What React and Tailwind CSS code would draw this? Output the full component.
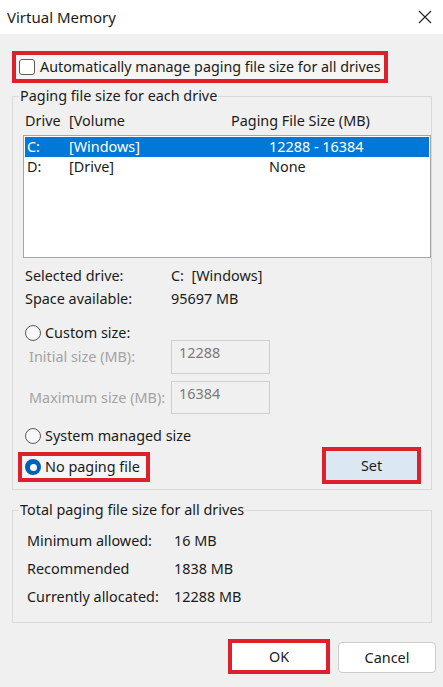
import React from "react";

function Radio({ checked }) {
  if (checked) {
    return (
      <span className="w-[16px] h-[16px] rounded-full bg-[#0060b8] flex items-center justify-center shrink-0">
        <span className="w-[7px] h-[7px] rounded-full bg-white" />
      </span>
    );
  }
  return <span className="w-[16px] h-[16px] rounded-full border border-[#5a5a5a] bg-[#f7f7f7] shrink-0" />;
}

export default function App() {
  return (
    <div className="w-[443px] h-[687px] bg-[#f0f0f0] text-[#1b1b1b] flex flex-col overflow-hidden font-['Noto_Sans',sans-serif] text-[14.4px] leading-[20px]">
      {/* Title bar */}
      <div className="h-[34px] shrink-0 bg-white flex items-center justify-between pl-[7px] pr-[11px]">
        <span className="text-[15px]">Virtual Memory</span>
        <svg width="14" height="14" viewBox="0 0 14 14" className="text-[#222]">
          <path d="M1 1 L13 13 M13 1 L1 13" stroke="currentColor" strokeWidth="1.1" fill="none" />
        </svg>
      </div>

      {/* Auto manage checkbox */}
      <div className="mt-[17px] ml-[12px] w-[376px] h-[32px] border-4 border-[#de1f2c] bg-[#f5f5f5] flex items-center pl-[3px] gap-[5px]">
        <span className="w-[16px] h-[16px] rounded-[3px] border border-[#5c5c5c] bg-white shrink-0" />
        <span className="text-[14.3px] whitespace-nowrap">Automatically manage paging file size for all drives</span>
      </div>

      {/* Group 1 */}
      <fieldset className="mt-[3px] ml-[12px] w-[420px] border border-[#d9d9d9] pb-[5px]">
        <legend className="ml-[6px] px-[1px] h-[20px] leading-[20px]">Paging file size for each drive</legend>

        <div className="h-[29px] flex items-center pl-[12px]">
          <span className="w-[44px]">Drive</span>
          <span className="w-[162px]">[Volume</span>
          <span>Paging File Size (MB)</span>
        </div>

        <div className="ml-[10px] w-[408px] h-[123px] border border-[#a5a5a5] bg-white pt-[1px] px-[1px]">
          <div className="h-[20px] flex items-center bg-[#0078d7] text-white pl-[2px]">
            <span className="w-[42px]">C:</span>
            <span className="w-[200px]">[Windows]</span>
            <span>12288 - 16384</span>
          </div>
          <div className="h-[20px] flex items-center pl-[2px]">
            <span className="w-[42px]">D:</span>
            <span className="w-[200px]">[Drive]</span>
            <span>None</span>
          </div>
        </div>

        <div className="mt-[6px] h-[23px] flex items-center pl-[12px]">
          <span className="w-[146px]">Selected drive:</span>
          <span>C:&nbsp;&nbsp;[Windows]</span>
        </div>
        <div className="h-[23px] flex items-center pl-[12px]">
          <span className="w-[146px]">Space available:</span>
          <span>95697 MB</span>
        </div>

        <div className="mt-[15px] h-[16px] flex items-center pl-[12px] gap-[4px]">
          <Radio />
          <span>Custom size:</span>
        </div>

        <div className="mt-[-1px] h-[34px] flex items-center pl-[16px]">
          <span className="w-[142px] text-[#a3a3a3]">Initial size (MB):</span>
          <div className="w-[99px] h-[34px] border border-[#cfcfcf] pl-[7px] pt-[2px] text-[#7a7a7a]">12288</div>
        </div>
        <div className="mt-[7px] h-[33px] flex items-center pl-[16px]">
          <span className="w-[142px] text-[#a3a3a3]">Maximum size (MB):</span>
          <div className="w-[99px] h-[33px] border border-[#cfcfcf] pl-[7px] pt-[2px] text-[#7a7a7a]">16384</div>
        </div>

        <div className="mt-[14px] h-[16px] flex items-center pl-[12px] gap-[4px]">
          <Radio />
          <span>System managed size</span>
        </div>

        <div className="mt-[3px] flex items-start">
          <div className="ml-[5px] mt-[5px] w-[132px] h-[30px] border-4 border-[#de1f2c] bg-[#f5f5f5] flex items-center pl-[3px] gap-[4px]">
            <Radio checked />
            <span className="whitespace-nowrap">No paging file</span>
          </div>
          <div className="ml-auto mr-[10px] w-[99px] h-[37px] border-4 border-[#de1f2c] bg-[#dbe7f3] flex items-center justify-center">
            Set
          </div>
        </div>
      </fieldset>

      {/* Group 2 */}
      <fieldset className="mt-[10px] ml-[12px] w-[420px] border border-[#d9d9d9] pb-[11px]">
        <legend className="ml-[6px] px-[1px] h-[20px] leading-[20px]">Total paging file size for all drives</legend>
        <div className="mt-[7px]">
          <div className="h-[28px] flex items-center pl-[14px]">
            <span className="w-[147px]">Minimum allowed:</span>
            <span>16 MB</span>
          </div>
          <div className="h-[28px] flex items-center pl-[14px]">
            <span className="w-[147px]">Recommended</span>
            <span>1838 MB</span>
          </div>
          <div className="h-[28px] flex items-center pl-[14px]">
            <span className="w-[147px]">Currently allocated:</span>
            <span>12288 MB</span>
          </div>
        </div>
      </fieldset>

      {/* Buttons */}
      <div className="mt-[16px] flex justify-end items-start pr-[7px] gap-[8px]">
        <div className="w-[102px] h-[35px] border-4 border-[#de1f2c] bg-white flex items-center justify-center">OK</div>
        <div className="mt-[3px] w-[98px] h-[31px] border border-[#cccccc] rounded-[4px] bg-white flex items-center justify-center">
          Cancel
        </div>
      </div>
    </div>
  );
}
